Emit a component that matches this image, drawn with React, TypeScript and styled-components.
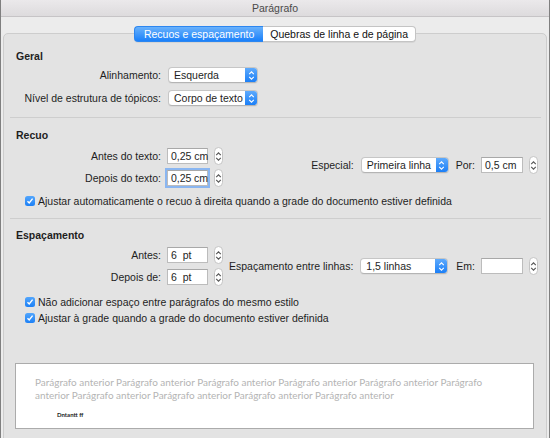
import React from 'react';
import styled, { createGlobalStyle } from 'styled-components';

const GlobalStyle = createGlobalStyle`
  html, body { margin: 0; padding: 0; background: #ececec; }
  body {
    font-family: "Liberation Sans", Arial, sans-serif;
    font-size: 10.5px;
    color: #1e1e1e;
    overflow: hidden;
  }
  * { box-sizing: border-box; }
`;

const Window = styled.div`
  width: 550px;
  height: 438px;
  display: flex;
  flex-direction: column;
  border-left: 1px solid #7f7f7f;
  border-right: 1px solid #7f7f7f;
  background: #ececec;
  overflow: hidden;
`;

const TitleBar = styled.div`
  flex: none;
  height: 17px;
  display: flex;
  align-items: center;
  justify-content: center;
  background: linear-gradient(#ebe9eb, #dddbdd);
  border-bottom: 1px solid #c6c4c6;
  color: #4a4a4a;
  font-size: 10.5px;
`;

const Body = styled.div`
  flex: 1;
  display: flex;
  flex-direction: column;
  padding: 0 2px;
  overflow: hidden;
`;

const TabRow = styled.div`
  flex: none;
  margin-top: 9px;
  height: 16px;
  display: flex;
  justify-content: center;
  position: relative;
  z-index: 1;
`;

const Tab = styled.div<{ $active?: boolean }>`
  height: 16px;
  padding: 0 ${(p) => (p.$active ? 9 : 7)}px;
  display: flex;
  align-items: center;
  white-space: nowrap;
  font-size: 10.5px;
  color: ${(p) => (p.$active ? '#fff' : '#111')};
  background: ${(p) => (p.$active ? 'linear-gradient(#69b1fb, #1a80fa)' : '#fff')};
  border: 1px solid ${(p) => (p.$active ? '#2c86f0' : '#c4c4c4')};
  box-shadow: 0 1px 0 rgba(0, 0, 0, 0.06);
  &:first-child { border-radius: 4px 0 0 4px; border-right: none; }
  &:last-child { border-radius: 0 4px 4px 0; border-left: none; }
`;

const Box = styled.div`
  flex: 1 0 auto;
  margin-top: -9px;
  margin-bottom: -12px;
  background: #e3e3e3;
  border: 1px solid #cdcdcd;
  border-radius: 5px;
  padding: 15px 8px 0 12px;
  display: flex;
  flex-direction: column;
`;

const Heading = styled.div<{ $gap?: number }>`
  font-weight: bold;
  line-height: 14px;
  height: 14px;
  margin-top: ${(p) => p.$gap ?? 0}px;
`;

const Separator = styled.div<{ $gap: number }>`
  height: 1px;
  background: #cecece;
  margin: ${(p) => p.$gap}px -3px 0 -6px;
`;

const FormGrid = styled.div<{ $gap: number; $rowGap: number; $top: number }>`
  display: grid;
  grid-template-columns: 145px auto;
  grid-auto-rows: 16px;
  column-gap: ${(p) => p.$gap}px;
  row-gap: ${(p) => p.$rowGap}px;
  align-items: center;
  justify-content: start;
  margin-top: ${(p) => p.$top}px;
`;

const FieldBlock = styled.div<{ $top: number }>`
  display: flex;
  align-items: center;
  margin-top: ${(p) => p.$top}px;
`;

const SideGroup = styled.div<{ $lift?: number }>`
  margin-left: auto;
  display: flex;
  align-items: center;
  margin-bottom: ${(p) => p.$lift ?? 0}px;
`;

const Label = styled.span<{ $gap?: number; $lead?: number }>`
  text-align: right;
  white-space: nowrap;
  color: #1e1e1e;
  margin-left: ${(p) => p.$lead ?? 0}px;
  margin-right: ${(p) => p.$gap ?? 0}px;
`;

const SelectBox = styled.div<{ $width: number }>`
  width: ${(p) => p.$width}px;
  height: 16px;
  display: flex;
  align-items: stretch;
  background: #fff;
  border: 1px solid #c6c6c6;
  border-bottom-color: #b4b4b4;
  border-radius: 4px;
  box-shadow: 0 1px 0 rgba(0, 0, 0, 0.04);
  overflow: hidden;
`;

const SelectText = styled.span`
  flex: 1;
  padding-left: 5px;
  display: flex;
  align-items: center;
  white-space: nowrap;
  overflow: hidden;
`;

const SelectArrow = styled.span`
  flex: none;
  width: 12px;
  display: flex;
  align-items: center;
  justify-content: center;
  background: linear-gradient(#5eaafc, #1b7ff7);
`;

const TextField = styled.div<{ $width: number; $focused?: boolean }>`
  width: ${(p) => p.$width}px;
  height: 16px;
  display: flex;
  align-items: center;
  padding: 0 3px;
  background: #fff;
  border: 1px solid #bcbcbc;
  border-top-color: #a8a8a8;
  white-space: pre;
  box-shadow: ${(p) => (p.$focused ? '0 0 0 2px #8ab6f1' : 'none')};
`;

const Caret = styled.span`
  display: inline-block;
  width: 1px;
  height: 12px;
  margin: 0 1px 0 1.5px;
  background: #000;
`;

const StepperBox = styled.div<{ $gap: number }>`
  width: 9px;
  height: 18px;
  margin-left: ${(p) => p.$gap}px;
  background: #fff;
  border: 1px solid #c4c4c4;
  border-radius: 4.5px;
  display: flex;
  align-items: center;
  justify-content: center;
`;

const Cell = styled.div`
  display: flex;
  align-items: center;
`;

const CheckRow = styled.label<{ $top: number }>`
  display: flex;
  align-items: center;
  height: 14px;
  margin-top: ${(p) => p.$top}px;
  padding-left: 9px;
  white-space: nowrap;
`;

const CheckMark = styled.span`
  width: 10px;
  height: 10px;
  flex: none;
  margin-right: 3px;
  border-radius: 2.5px;
  background: linear-gradient(#53a6fc, #1c80f6);
  display: flex;
  align-items: center;
  justify-content: center;
`;

const Preview = styled.div`
  margin: 38px 4px 0 -1px;
  height: 66px;
  background: #fff;
  border: 1px solid #ababab;
  padding: 12px 0 0 19px;
  font-family: Lato, "Open Sans", sans-serif;
`;

const PreviewLine = styled.div`
  font-size: 9.95px;
  line-height: 12.5px;
  color: #b4b4b4;
  white-space: nowrap;
`;

const PreviewCurrent = styled.div`
  margin: 10px 0 0 22px;
  font-size: 6px;
  line-height: 7px;
  font-weight: bold;
  color: #1a1a1a;
`;

const UpDownIcon = ({ color }: { color: string }) => (
  <svg width="7" height="11" viewBox="0 0 7 11">
    <path d="M1.2 4.2 L3.5 1.9 L5.8 4.2 M1.2 6.8 L3.5 9.1 L5.8 6.8" fill="none" stroke={color} strokeWidth="1.1" />
  </svg>
);

const Select = ({ value, width }: { value: string; width: number }) => (
  <SelectBox $width={width}>
    <SelectText>{value}</SelectText>
    <SelectArrow>
      <UpDownIcon color="#fff" />
    </SelectArrow>
  </SelectBox>
);

const Stepper = ({ gap }: { gap: number }) => (
  <StepperBox $gap={gap}>
    <UpDownIcon color="#555" />
  </StepperBox>
);

const Check = ({ label, top }: { label: string; top: number }) => (
  <CheckRow $top={top}>
    <CheckMark>
      <svg width="8" height="8" viewBox="0 0 8 8">
        <path d="M1.5 4.2 L3.2 6 L6.6 1.6" fill="none" stroke="#fff" strokeWidth="1.4" />
      </svg>
    </CheckMark>
    {label}
  </CheckRow>
);

const SpinField = ({ value, focused }: { value: React.ReactNode; focused?: boolean }) => (
  <Cell>
    <TextField $width={41} $focused={focused}>{value}</TextField>
    <Stepper gap={6} />
  </Cell>
);

export default function App() {
  const repeated = 'Parágrafo anterior ';
  return (
    <>
      <GlobalStyle />
      <Window>
        <TitleBar>Parágrafo</TitleBar>
        <Body>
          <TabRow>
            <Tab $active>Recuos e espaçamento</Tab>
            <Tab>Quebras de linha e de página</Tab>
          </TabRow>
          <Box>
            <Heading>Geral</Heading>
            <FormGrid $gap={7} $rowGap={7} $top={4}>
              <Label>Alinhamento:</Label>
              <Select value="Esquerda" width={90} />
              <Label>Nível de estrutura de tópicos:</Label>
              <Select value="Corpo de texto" width={90} />
            </FormGrid>
            <Separator $gap={11} />

            <Heading $gap={10}>Recuo</Heading>
            <FieldBlock $top={6}>
              <FormGrid $gap={6} $rowGap={6} $top={0}>
                <Label>Antes do texto:</Label>
                <SpinField value="0,25 cm" />
                <Label>Depois do texto:</Label>
                <SpinField focused value={<>0,25<Caret />cm</>} />
              </FormGrid>
              <SideGroup $lift={4}>
                <Label $gap={7}>Especial:</Label>
                <Select value="Primeira linha" width={88} />
                <Label $gap={6} $lead={7}>Por:</Label>
                <TextField $width={42}>0,5 cm</TextField>
                <Stepper gap={6} />
              </SideGroup>
            </FieldBlock>
            <Check top={8} label="Ajustar automaticamente o recuo à direita quando a grade do documento estiver definida" />
            <Separator $gap={10} />

            <Heading $gap={9}>Espaçamento</Heading>
            <FieldBlock $top={5}>
              <FormGrid $gap={6} $rowGap={6} $top={0}>
                <Label>Antes:</Label>
                <SpinField value="6  pt" />
                <Label>Depois de:</Label>
                <SpinField value="6  pt" />
              </FormGrid>
              <SideGroup>
                <Label $gap={7}>Espaçamento entre linhas:</Label>
                <Select value="1,5 linhas" width={88} />
                <Label $gap={6} $lead={8}>Em:</Label>
                <TextField $width={42} />
                <Stepper gap={6} />
              </SideGroup>
            </FieldBlock>
            <Check top={10} label="Não adicionar espaço entre parágrafos do mesmo estilo" />
            <Check top={2} label="Ajustar à grade quando a grade do documento estiver definida" />

            <Preview>
              <PreviewLine>{repeated.repeat(5)}Parágrafo</PreviewLine>
              <PreviewLine>anterior {repeated.repeat(3)}Parágrafo anterior</PreviewLine>
              <PreviewCurrent>Dntantt ff</PreviewCurrent>
            </Preview>
          </Box>
        </Body>
      </Window>
    </>
  );
}
